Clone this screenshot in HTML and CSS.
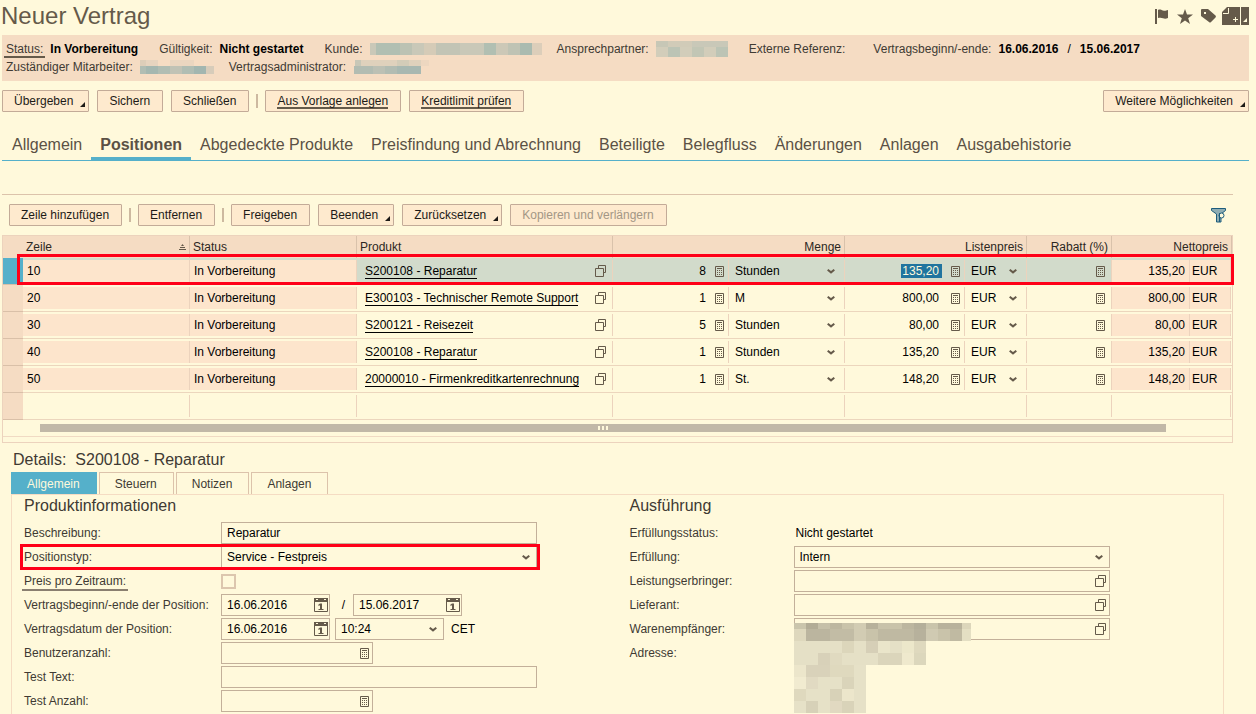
FILE: index.html
```html
<!DOCTYPE html>
<html lang="de">
<head>
  <meta charset="UTF-8">
  <meta name="viewport" content="width=device-width, initial-scale=1.0">
  <title>Neuer Vertrag</title>
  <link rel="stylesheet" href="styles.css">
</head>
<body>

  <!-- Icon definitions -->
  <svg class="icon-defs" aria-hidden="true">
    <symbol id="calc" viewBox="0 0 9 11">
      <path d="M.5.5h8v10h-8z" fill="none" stroke="#655a4a"/>
      <path d="M2 2h5v1H2zM2 4h1v1H2zM4 4h1v1H4zM6 4h1v1H6zM2 6h1v1H2zM4 6h1v1H4zM6 6h1v1H6zM2 8h1v1H2zM4 8h1v1H4zM6 8h1v1H6z" fill="#655a4a"/>
    </symbol>
    <symbol id="help" viewBox="0 0 11 12">
      <path d="M.5 3.5h8v8h-8zM3.5 3.5v-3h7v7h-2" fill="none" stroke="#655a4a"/>
    </symbol>
    <symbol id="chevron" viewBox="0 0 8 5">
      <path d="M.7.8L4 3.4 7.3.8" fill="none" stroke="#655a4a" stroke-width="2"/>
    </symbol>
    <symbol id="calendar" viewBox="0 0 14 14">
      <path d="M.5.5h13v13H.5z" fill="none" stroke="#655a4a"/>
      <path d="M0 0h14v4H0z" fill="#655a4a"/>
      <path d="M2 1h2v1H2zM10 1h2v1h-2z" fill="#fff9db"/>
      <path d="M4 7l2-1.500h2V11h1.500v1h-5v-1H6V7.500H4z" fill="#655a4a"/>
    </symbol>
  </svg>

  <div class="page">
    <header class="title-bar">
      <h1>Neuer Vertrag</h1>
      <div class="title-icons">
        <button type="button" aria-label="Markieren">
          <svg width="16" height="15" viewBox="0 0 16 15"><path d="M0 0h2v15H0zM3 1c2-1 3 0 5 .5s3 0 5-.5v8c-2 .8-3.500.8-5 .2S5 8.500 3 9z" fill="#655a4a"/></svg>
        </button>
        <button type="button" aria-label="Favorit">
          <svg width="16" height="15" viewBox="0 0 16 15"><path d="M8 0l2 5.600h6l-4.800 3.600L13 15l-5-3.500L3 15l1.800-5.800L0 5.600h6z" fill="#655a4a"/></svg>
        </button>
        <button type="button" aria-label="Etikett">
          <svg width="17" height="14" viewBox="0 0 17 14"><path d="M3 0h6l7.500 6.500q.8 1 0 2L12 13q-1 1-2 0L2 7V1q0-1 1-1z" fill="#655a4a"/><path d="M5 3h2v2H5z" fill="#fff9db"/></svg>
        </button>
        <button type="button" aria-label="Neu">
          <svg width="27" height="18" viewBox="0 0 27 18"><path d="M5 0h13v18H0V5h5zM5 0v5H0zM19 0h8v18h-8z" fill="#655a4a"/><path d="M6.500 1v5.500H1M13.500 10v5M11 12.500h5" fill="none" stroke="#fff9db"/><path d="M25 11v4h-4z" fill="#fff9db"/></svg>
        </button>
      </div>
    </header>

    <section class="status-band">
      <div class="status-row">
        <div class="info"><a class="status-link" href="#status">Status:</a><b>In Vorbereitung</b></div>
        <div class="info"><span>Gültigkeit:</span><b>Nicht gestartet</b></div>
        <div class="info info-masked"><span>Kunde:</span>
          <svg width="172" height="12">
            <rect width="172" height="12" fill="#c9c8b8"/>
            <rect x="6" width="24" height="12" fill="#b1bfb2"/>
            <rect x="30" width="12" height="12" fill="#bcc2b3"/>
            <rect x="54" width="12" height="12" fill="#d5cbb7"/>
            <rect x="66" width="24" height="12" fill="#c2c4b5"/>
            <rect x="114" width="12" height="12" fill="#b1bfb2"/>
            <rect x="126" width="12" height="12" fill="#ccc8b7"/>
            <rect x="138" width="12" height="12" fill="#bfc3b4"/>
            <rect x="150" width="12" height="12" fill="#aabbb0"/>
            <rect x="162" width="10" height="12" fill="#dcceba"/>
          </svg>
        </div>
        <div class="info"><span>Ansprechpartner:</span>
          <svg width="72" height="16">
            <rect width="72" height="6" fill="#d1cbb8"/>
            <rect width="12" height="6" fill="#c7c7b6"/>
            <rect x="36" width="36" height="6" fill="#c9c8b8"/>
            <rect y="6" width="72" height="10" fill="#d2cdba"/>
            <rect x="12" y="6" width="12" height="10" fill="#bcc4b5"/>
            <rect x="36" y="6" width="12" height="10" fill="#c2c6b5"/>
            <rect x="60" y="6" width="12" height="10" fill="#bcc4b5"/>
          </svg>
        </div>
        <div class="info"><span>Externe Referenz:</span><b></b></div>
        <div class="info"><span>Vertragsbeginn/-ende:</span><b>16.06.2016</b><b class="slash">/</b><b>15.06.2017</b></div>
      </div>
      <div class="status-row">
        <div class="info info-masked"><span>Zuständiger Mitarbeiter:</span>
          <svg width="74" height="14">
            <rect width="6" height="6" fill="#ddceb9"/>
            <rect x="6" width="12" height="6" fill="#e6d4bf"/>
            <rect x="30" width="24" height="6" fill="#ead6c0"/>
            <rect y="6" width="74" height="8" fill="#b0bdb3"/>
            <rect x="6" y="6" width="12" height="8" fill="#a4b7b0"/>
            <rect x="30" y="6" width="12" height="8" fill="#c0c2b5"/>
            <rect x="54" y="6" width="12" height="8" fill="#a2b6b0"/>
            <rect x="66" y="6" width="8" height="8" fill="#d7ccba"/>
          </svg>
        </div>
        <div class="info"><span>Vertragsadministrator:</span>
          <svg width="76" height="14">
            <rect x="2" width="66" height="6" fill="#dfd1bc"/>
            <rect x="2" width="6" height="6" fill="#c8c7b7"/>
            <rect x="44" width="12" height="6" fill="#d3ccb8"/>
            <rect x="68" width="8" height="6" fill="#edd7c0"/>
            <rect x="1" y="6" width="67" height="8" fill="#b2bcb2"/>
            <rect x="20" y="6" width="12" height="8" fill="#bcc0b4"/>
            <rect x="44" y="6" width="24" height="8" fill="#a8b8b1"/>
          </svg>
        </div>
      </div>
    </section>

    <div class="toolbar">
      <button type="button" class="btn btn-menu">Übergeben</button>
      <button type="button" class="btn">Sichern</button>
      <button type="button" class="btn">Schließen</button>
      <span class="sep"></span>
      <button type="button" class="btn"><span class="uline">Aus Vorlage anlegen</span></button>
      <button type="button" class="btn"><span class="uline">Kreditlimit prüfen</span></button>
      <button type="button" class="btn btn-menu push">Weitere Möglichkeiten</button>
    </div>

    <nav class="tabs">
      <a href="#allgemein">Allgemein</a>
      <a href="#positionen" class="active">Positionen</a>
      <a href="#produkte">Abgedeckte Produkte</a>
      <a href="#preise">Preisfindung und Abrechnung</a>
      <a href="#beteiligte">Beteiligte</a>
      <a href="#belegfluss">Belegfluss</a>
      <a href="#aenderungen">Änderungen</a>
      <a href="#anlagen">Anlagen</a>
      <a href="#ausgabe">Ausgabehistorie</a>
    </nav>

    <main class="content">
      <div class="toolbar list-toolbar">
        <button type="button" class="btn">Zeile hinzufügen</button>
        <span class="sep"></span>
        <button type="button" class="btn">Entfernen</button>
        <span class="sep"></span>
        <button type="button" class="btn">Freigeben</button>
        <button type="button" class="btn btn-menu">Beenden</button>
        <button type="button" class="btn btn-menu">Zurücksetzen</button>
        <button type="button" class="btn" disabled>Kopieren und verlängern</button>
        <button type="button" class="icon-btn push" aria-label="Filter">
          <svg width="15" height="15" viewBox="0 0 15 15"><path d="M.5.5h14v2L10 6v8H5.500V6L.5 2.500z" fill="#8fadb3" stroke="#1d5c7c"/><circle cx="10.500" cy="7.500" r="2.500" fill="#fff9db" stroke="#1d5c7c"/><path d="M8.500 5v9" stroke="#1d5c7c"/></svg>
        </button>
      </div>

      <div class="list">
        <table>
          <colgroup>
            <col class="c-sel"><col class="c-line"><col class="c-status"><col><col class="c-qty"><col class="c-unit">
            <col class="c-price"><col class="c-cur"><col class="c-disc"><col class="c-net"><col class="c-netcur">
          </colgroup>
          <thead>
            <tr>
              <th></th>
              <th><div class="th">Zeile
                <svg class="sort" width="7" height="6" viewBox="0 0 7 6"><path d="M3.500 0L5 2H2zM1 3h5v1H1zM0 5h7v1H0z" fill="#655a4a"/></svg></div></th>
              <th><div class="th">Status</div></th>
              <th><div class="th">Produkt</div></th>
              <th colspan="2"><div class="th num">Menge</div></th>
              <th colspan="2"><div class="th num">Listenpreis</div></th>
              <th><div class="th num">Rabatt (%)</div></th>
              <th colspan="2"><div class="th num">Nettopreis</div></th>
            </tr>
          </thead>
          <tbody>
            <tr class="selected">
              <td class="sel"></td>
              <td><div class="cell ro">10</div></td>
              <td><div class="cell ro">In Vorbereitung</div></td>
              <td><div class="cell product"><a href="#p10">S200108 - Reparatur</a><svg width="11" height="12"><use href="#help"/></svg></div></td>
              <td><div class="cell qty"><input type="text" value="8" aria-label="Menge 10"><svg width="9" height="11"><use href="#calc"/></svg></div></td>
              <td><div class="cell drop"><select aria-label="Einheit 10"><option>Stunden</option></select><svg width="8" height="5"><use href="#chevron"/></svg></div></td>
              <td><div class="cell price"><input type="text" class="marked" value="135,20" aria-label="Listenpreis 10"><svg width="9" height="11"><use href="#calc"/></svg></div></td>
              <td><div class="cell drop"><select aria-label="Währung 10"><option>EUR</option></select><svg width="8" height="5"><use href="#chevron"/></svg></div></td>
              <td><div class="cell disc"><input type="text" aria-label="Rabatt 10"><svg width="9" height="11"><use href="#calc"/></svg></div></td>
              <td><div class="cell ro net">135,20</div></td>
              <td><div class="cell ro netcur">EUR</div></td>
            </tr>
            <tr>
              <td class="sel"></td>
              <td><div class="cell ro">20</div></td>
              <td><div class="cell ro">In Vorbereitung</div></td>
              <td><div class="cell product"><a href="#p20">E300103 - Technischer Remote Support</a><svg width="11" height="12"><use href="#help"/></svg></div></td>
              <td><div class="cell qty"><input type="text" value="1" aria-label="Menge 20"><svg width="9" height="11"><use href="#calc"/></svg></div></td>
              <td><div class="cell drop"><select aria-label="Einheit 20"><option>M</option></select><svg width="8" height="5"><use href="#chevron"/></svg></div></td>
              <td><div class="cell price"><input type="text" value="800,00" aria-label="Listenpreis 20"><svg width="9" height="11"><use href="#calc"/></svg></div></td>
              <td><div class="cell drop"><select aria-label="Währung 20"><option>EUR</option></select><svg width="8" height="5"><use href="#chevron"/></svg></div></td>
              <td><div class="cell disc"><input type="text" aria-label="Rabatt 20"><svg width="9" height="11"><use href="#calc"/></svg></div></td>
              <td><div class="cell ro net">800,00</div></td>
              <td><div class="cell ro netcur">EUR</div></td>
            </tr>
            <tr>
              <td class="sel"></td>
              <td><div class="cell ro">30</div></td>
              <td><div class="cell ro">In Vorbereitung</div></td>
              <td><div class="cell product"><a href="#p30">S200121 - Reisezeit</a><svg width="11" height="12"><use href="#help"/></svg></div></td>
              <td><div class="cell qty"><input type="text" value="5" aria-label="Menge 30"><svg width="9" height="11"><use href="#calc"/></svg></div></td>
              <td><div class="cell drop"><select aria-label="Einheit 30"><option>Stunden</option></select><svg width="8" height="5"><use href="#chevron"/></svg></div></td>
              <td><div class="cell price"><input type="text" value="80,00" aria-label="Listenpreis 30"><svg width="9" height="11"><use href="#calc"/></svg></div></td>
              <td><div class="cell drop"><select aria-label="Währung 30"><option>EUR</option></select><svg width="8" height="5"><use href="#chevron"/></svg></div></td>
              <td><div class="cell disc"><input type="text" aria-label="Rabatt 30"><svg width="9" height="11"><use href="#calc"/></svg></div></td>
              <td><div class="cell ro net">80,00</div></td>
              <td><div class="cell ro netcur">EUR</div></td>
            </tr>
            <tr>
              <td class="sel"></td>
              <td><div class="cell ro">40</div></td>
              <td><div class="cell ro">In Vorbereitung</div></td>
              <td><div class="cell product"><a href="#p40">S200108 - Reparatur</a><svg width="11" height="12"><use href="#help"/></svg></div></td>
              <td><div class="cell qty"><input type="text" value="1" aria-label="Menge 40"><svg width="9" height="11"><use href="#calc"/></svg></div></td>
              <td><div class="cell drop"><select aria-label="Einheit 40"><option>Stunden</option></select><svg width="8" height="5"><use href="#chevron"/></svg></div></td>
              <td><div class="cell price"><input type="text" value="135,20" aria-label="Listenpreis 40"><svg width="9" height="11"><use href="#calc"/></svg></div></td>
              <td><div class="cell drop"><select aria-label="Währung 40"><option>EUR</option></select><svg width="8" height="5"><use href="#chevron"/></svg></div></td>
              <td><div class="cell disc"><input type="text" aria-label="Rabatt 40"><svg width="9" height="11"><use href="#calc"/></svg></div></td>
              <td><div class="cell ro net">135,20</div></td>
              <td><div class="cell ro netcur">EUR</div></td>
            </tr>
            <tr>
              <td class="sel"></td>
              <td><div class="cell ro">50</div></td>
              <td><div class="cell ro">In Vorbereitung</div></td>
              <td><div class="cell product"><a href="#p50">20000010 - Firmenkreditkartenrechnung</a><svg width="11" height="12"><use href="#help"/></svg></div></td>
              <td><div class="cell qty"><input type="text" value="1" aria-label="Menge 50"><svg width="9" height="11"><use href="#calc"/></svg></div></td>
              <td><div class="cell drop"><select aria-label="Einheit 50"><option>St.</option></select><svg width="8" height="5"><use href="#chevron"/></svg></div></td>
              <td><div class="cell price"><input type="text" value="148,20" aria-label="Listenpreis 50"><svg width="9" height="11"><use href="#calc"/></svg></div></td>
              <td><div class="cell drop"><select aria-label="Währung 50"><option>EUR</option></select><svg width="8" height="5"><use href="#chevron"/></svg></div></td>
              <td><div class="cell disc"><input type="text" aria-label="Rabatt 50"><svg width="9" height="11"><use href="#calc"/></svg></div></td>
              <td><div class="cell ro net">148,20</div></td>
              <td><div class="cell ro netcur">EUR</div></td>
            </tr>
            <tr>
              <td class="sel"></td>
              <td><div class="cell"></div></td>
              <td><div class="cell"></div></td>
              <td><div class="cell"></div></td>
              <td colspan="2"><div class="cell"></div></td>
              <td colspan="2"><div class="cell"></div></td>
              <td><div class="cell"></div></td>
              <td colspan="2"><div class="cell last"></div></td>
            </tr>
          </tbody>
        </table>
        <div class="scroll">
          <div class="thumb"><i></i><i></i><i></i></div>
        </div>
        <div class="mark mark-row"></div>
      </div>

      <section class="details">
        <h2><span>Details:</span><span>S200108 - Reparatur</span></h2>
        <nav class="sub-tabs">
          <a href="#d-allgemein" class="active">Allgemein</a>
          <a href="#d-steuern">Steuern</a>
          <a href="#d-notizen">Notizen</a>
          <a href="#d-anlagen">Anlagen</a>
        </nav>

        <div class="panel">
          <form class="group">
            <h3>Produktinformationen</h3>
            <div class="row">
              <label for="desc">Beschreibung:</label>
              <div class="field"><input type="text" id="desc" value="Reparatur"></div>
            </div>
            <div class="row">
              <label for="ptype">Positionstyp:</label>
              <div class="field"><select id="ptype"><option>Service - Festpreis</option></select><svg class="arrow" width="8" height="5"><use href="#chevron"/></svg></div>
              <div class="mark mark-field"></div>
            </div>
            <div class="row">
              <label for="period"><span class="period-label">Preis pro Zeitraum:</span></label>
              <input type="checkbox" id="period">
            </div>
            <div class="row">
              <label for="from">Vertragsbeginn/-ende der Position:</label>
              <div class="multi">
                <div class="field date"><input type="text" id="from" value="16.06.2016"><svg class="cal" width="14" height="14"><use href="#calendar"/></svg></div>
                <span class="between">/</span>
                <div class="field date"><input type="text" value="15.06.2017" aria-label="Vertragsende"><svg class="cal" width="14" height="14"><use href="#calendar"/></svg></div>
              </div>
            </div>
            <div class="row">
              <label for="cdate">Vertragsdatum der Position:</label>
              <div class="multi time">
                <div class="field date"><input type="text" id="cdate" value="16.06.2016"><svg class="cal" width="14" height="14"><use href="#calendar"/></svg></div>
                <div class="field date"><select aria-label="Uhrzeit"><option>10:24</option></select><svg class="arrow" width="8" height="5"><use href="#chevron"/></svg></div>
                <span class="zone">CET</span>
              </div>
            </div>
            <div class="row">
              <label for="users">Benutzeranzahl:</label>
              <div class="field short"><input type="text" id="users"><svg width="9" height="11"><use href="#calc"/></svg></div>
            </div>
            <div class="row">
              <label for="ttext">Test Text:</label>
              <div class="field"><input type="text" id="ttext"></div>
            </div>
            <div class="row">
              <label for="tcount">Test Anzahl:</label>
              <div class="field short"><input type="text" id="tcount"><svg width="9" height="11"><use href="#calc"/></svg></div>
            </div>
          </form>

          <form class="group group-right">
            <h3>Ausführung</h3>
            <div class="row">
              <span class="label">Erfüllungsstatus:</span>
              <span class="value">Nicht gestartet</span>
            </div>
            <div class="row">
              <label for="fulfil">Erfüllung:</label>
              <div class="field"><select id="fulfil"><option>Intern</option></select><svg class="arrow" width="8" height="5"><use href="#chevron"/></svg></div>
            </div>
            <div class="row">
              <label for="provider">Leistungserbringer:</label>
              <div class="field"><input type="text" id="provider"><svg class="f4" width="11" height="12"><use href="#help"/></svg></div>
            </div>
            <div class="row">
              <label for="supplier">Lieferant:</label>
              <div class="field"><input type="text" id="supplier"><svg class="f4" width="11" height="12"><use href="#help"/></svg></div>
            </div>
            <div class="row">
              <label for="shipto">Warenempfänger:</label>
              <div class="field"><input type="text" id="shipto"><svg class="f4" width="11" height="12"><use href="#help"/></svg>
                <!-- masked customer and address -->
                <svg class="masked" width="177" height="90">
                  <rect width="177" height="18" fill="#c9c3aa"/>
                  <rect width="12" height="6" fill="#cac5ac"/><rect x="12" width="12" height="6" fill="#b2ac96"/><rect x="24" width="12" height="6" fill="#c6c0a9"/><rect x="36" width="12" height="6" fill="#bdb7a0"/><rect x="60" width="12" height="6" fill="#d2ccb3"/><rect x="72" width="12" height="6" fill="#b7b19b"/><rect x="84" width="12" height="6" fill="#c8c2aa"/><rect x="108" width="12" height="6" fill="#bcb69f"/><rect x="120" width="12" height="6" fill="#b4af9a"/><rect x="132" width="12" height="6" fill="#c9c4ab"/><rect x="144" width="24" height="6" fill="#b8b29c"/><rect x="168" width="9" height="6" fill="#dcd6bb"/>
                  <rect y="6" width="12" height="12" fill="#ded8bd"/><rect x="12" y="6" width="24" height="12" fill="#bbb59f"/><rect x="36" y="6" width="24" height="12" fill="#c2bca5"/><rect x="60" y="6" width="12" height="12" fill="#d2ccb3"/><rect x="84" y="6" width="36" height="12" fill="#bfb9a2"/><rect x="120" y="6" width="12" height="12" fill="#b7b19c"/><rect x="132" y="6" width="12" height="12" fill="#d0cab2"/><rect x="156" y="6" width="12" height="12" fill="#c0baa2"/><rect x="168" y="6" width="9" height="12" fill="#e4dfc3"/>
                  <rect y="18" width="132" height="24" fill="#e5e0c6"/>
                  <rect x="48" y="18" width="12" height="12" fill="#dcd6bb"/><rect x="72" y="18" width="12" height="12" fill="#d6cfb7"/><rect x="84" y="18" width="12" height="12" fill="#eae5ca"/><rect x="108" y="18" width="12" height="12" fill="#ece7ca"/><rect x="120" y="18" width="12" height="12" fill="#dfd9be"/>
                  <rect x="24" y="30" width="12" height="12" fill="#d8d1b9"/><rect x="36" y="30" width="12" height="12" fill="#e0dac0"/><rect x="84" y="30" width="24" height="12" fill="#dbd5bb"/><rect x="108" y="30" width="12" height="12" fill="#efe9cd"/><rect x="120" y="30" width="12" height="12" fill="#dcd7bc"/>
                  <rect y="42" width="72" height="48" fill="#e6e1c7"/>
                  <rect y="42" width="12" height="12" fill="#ece6cb"/><rect x="12" y="42" width="24" height="12" fill="#d9d2ba"/><rect x="36" y="42" width="24" height="12" fill="#dfd9be"/>
                  <rect y="54" width="12" height="12" fill="#f1ebd0"/><rect x="12" y="54" width="12" height="12" fill="#e1dac2"/><rect x="48" y="54" width="12" height="12" fill="#dad4ba"/>
                  <rect y="66" width="12" height="12" fill="#dfd9be"/><rect x="36" y="66" width="12" height="12" fill="#d8d2b8"/><rect x="48" y="66" width="12" height="12" fill="#ece6cb"/>
                  <rect x="12" y="78" width="12" height="12" fill="#d7d1b8"/><rect x="36" y="78" width="12" height="12" fill="#e1d9c1"/><rect x="48" y="78" width="12" height="12" fill="#d9d3b9"/>
                </svg>
              </div>
            </div>
            <div class="row">
              <span class="label">Adresse:</span>
              <span class="value"></span>
            </div>
          </form>
        </div>
      </section>
    </main>
  </div>

</body>
</html>
```
FILE: styles.css
```css
* {
  box-sizing: border-box;
}

body {
  margin: 0;
  background: #fff9db;
  color: #000;
  font-family: "Liberation Sans", Arial, sans-serif;
  font-size: 12px;
  line-height: 18px;
}

svg {
  display: block;
  flex: none;
}

a {
  color: inherit;
  text-decoration: none;
}

input, select, button {
  font: inherit;
  color: inherit;
}

.icon-defs {
  position: absolute;
  width: 0;
  height: 0;
}

.page {
  display: flex;
  flex-direction: column;
  min-height: 100vh;
  padding: 0 7px 0 2px;
}

/* Title */
.title-bar {
  display: flex;
  align-items: center;
  justify-content: space-between;
  height: 35px;
  margin-left: -1px;
  padding-bottom: 3px;
}

h1 {
  margin: 0;
  font-size: 24px;
  font-weight: 400;
  line-height: 28px;
  color: #655a4a;
}

.title-icons {
  display: flex;
  align-items: center;
  gap: 6px;
}

.title-icons button, .icon-btn {
  padding: 0;
  border: none;
  background: none;
}

/* Status band */
.status-band {
  padding: 5px 4px;
  background: #f5dcc3;
  color: #403a33;
}

.status-row {
  display: flex;
  gap: 21px;
  height: 18px;
}

.info {
  display: flex;
  align-items: center;
  gap: 7px;
  white-space: nowrap;
}

.info b {
  color: #000;
}

.info .slash {
  font-weight: 400;
  padding: 0 2px;
}

.info-masked {
  margin-right: -6px;
}

.status-link {
  height: 18px;
  margin: 0 -2px;
  padding: 0 2px;
  border-bottom: 2px solid #655a4a;
}

/* Buttons */
.toolbar {
  display: flex;
  align-items: center;
  gap: 8px;
  padding-top: 9px;
}

.btn {
  position: relative;
  height: 22px;
  padding: 0 12px 0 11px;
  border: 1px solid #c3ab98;
  border-radius: 1px;
  background: #feeace;
  color: #1d1a17;
  line-height: 20px;
  white-space: nowrap;
}

.btn:disabled {
  color: #a39785;
}

.btn-menu {
  padding-right: 15px;
}

.btn-menu::after {
  content: "";
  position: absolute;
  right: 3px;
  bottom: 4px;
  border: solid transparent;
  border-width: 0 0 5px 5px;
  border-bottom-color: #1d1a17;
}

.uline {
  display: inline-block;
  height: 18px;
  border-bottom: 2px solid #655a4a;
}

.sep {
  width: 2px;
  height: 14px;
  margin: 0 -1px;
  background: #cdb9a0;
}

.push {
  margin-left: auto;
}

/* Main tabs */
.tabs {
  display: flex;
  margin-top: 19px;
  padding-left: 1px;
  border-bottom: 1px solid #55b0ca;
  font-size: 16px;
  line-height: 28px;
  color: #5b5145;
}

.tabs a {
  height: 29px;
  padding: 0 9px;
  white-space: nowrap;
}

.tabs .active {
  border-bottom: 3px solid #55b0ca;
  font-weight: 700;
}

.content {
  display: flex;
  flex: 1;
  flex-direction: column;
  margin: 33px 16px 0 0;
  border-top: 1px solid #dcc3ab;
}

.list-toolbar {
  padding: 9px 7px;
}

/* Item list */
.list {
  position: relative;
  padding-bottom: 5px;
  border: 1px solid #ecd3bd;
}

table {
  width: 100%;
  table-layout: fixed;
  border-collapse: separate;
  border-spacing: 0;
}

.c-sel { width: 20px; }
.c-line, .c-status { width: 167px; }
.c-qty, .c-unit { width: 116px; }
.c-price { width: 120px; }
.c-cur { width: 62px; }
.c-disc { width: 85px; }
.c-net { width: 78px; }
.c-netcur { width: 42px; }

th {
  height: 22px;
  padding: 0;
  background: #f5dcc3;
  font-weight: 400;
  text-align: left;
  color: #2c2722;
}

.th {
  display: flex;
  align-items: center;
  justify-content: space-between;
  height: 22px;
  padding: 0 3px;
  border-right: 1px solid #d9c2ab;
}

.th.num {
  justify-content: flex-end;
}

td {
  height: 27px;
  padding: 2px 0;
  border-bottom: 1px solid #ecd6bd;
}

.sel {
  background: #f5dcc3;
  border-bottom-color: #d9c0a8;
}

.selected td {
  background: #d2dbcb;
}

.selected .sel {
  background: #55b0ca;
}

.cell {
  display: flex;
  align-items: center;
  height: 22px;
  padding: 0 4px;
  border-right: 1px solid #ecd3bd;
  white-space: nowrap;
}

.cell input, .cell select, .field input, .field select {
  flex: 1;
  width: 100%;
  min-width: 0;
  height: 18px;
  margin: 0;
  padding: 0;
  border: none;
  background: none;
  outline: none;
  appearance: none;
}

.cell input {
  text-align: right;
}

.ro {
  background: #fde5cc;
}

.product {
  justify-content: space-between;
  padding: 0 6px 0 8px;
}

.product a {
  padding-top: 1px;
  line-height: 13px;
  border-bottom: 1px solid #000;
}

.qty {
  gap: 9px;
}

.price {
  gap: 9px;
  justify-content: flex-end;
}

.price input {
  padding-right: 3px;
}

.price .marked {
  flex: none;
  width: 41px;
  height: 14px;
  background: #20749f;
  color: #fff9db;
}

.drop {
  padding: 0 9px 0 6px;
}

.disc {
  padding-right: 6px;
}

.net {
  justify-content: flex-end;
}

.netcur {
  margin-right: 1px;
  padding: 0 2px;
}

.last {
  margin-right: 1px;
}

.scroll {
  height: 17px;
  padding: 4px 66px 0 37px;
  border-bottom: 1px solid #f0dac3;
}

.thumb {
  display: flex;
  align-items: center;
  justify-content: center;
  gap: 2px;
  height: 8px;
  background: #c1b8a7;
}

.thumb i {
  width: 2px;
  height: 4px;
  background: #fff9db;
}

/* Red highlight frames */
.mark {
  position: absolute;
  border: 3px solid #ff0018;
  pointer-events: none;
}

.mark-row {
  top: 18px;
  left: 14px;
  right: -2px;
  height: 31px;
}

.mark-field {
  top: -1px;
  bottom: -1px;
  left: -4px;
  right: -3px;
}

/* Details */
.details {
  display: flex;
  flex: 1;
  flex-direction: column;
  margin: 6px 9px 0;
}

h2, h3 {
  margin: 0;
  font-size: 16px;
  font-weight: 400;
  line-height: 22px;
  color: #403a33;
}

h2 {
  display: flex;
  gap: 9px;
  padding: 0 2px 1px;
}

.sub-tabs {
  display: flex;
  gap: 2px;
}

.sub-tabs a {
  height: 22px;
  padding: 0 16px 0 15px;
  border: 1px solid #dcc3ab;
  border-bottom: none;
  line-height: 22px;
  color: #403a33;
}

.sub-tabs .active {
  border-color: #55b0ca;
  background: #55b0ca;
  color: #fff9db;
}

.panel {
  display: grid;
  grid-template-columns: 1fr 1fr;
  flex: 1;
  border: 1px solid #f5dcc3;
  border-bottom: none;
}

.group {
  padding-left: 12px;
}

h3 {
  margin-bottom: 4px;
}

.row {
  position: relative;
  display: grid;
  grid-template-columns: 197px 316px;
  align-items: center;
  width: max-content;
  height: 24px;
}

.group-right .row {
  grid-template-columns: 164px 316px;
}

.row label, .label {
  color: #403a33;
}

.value {
  padding-left: 2px;
}

.period-label {
  display: inline-block;
  margin: 0 -2px;
  padding: 0 2px;
  border-bottom: 2px solid #8a7f70;
  line-height: 16px;
}

.field {
  position: relative;
  display: flex;
  align-items: center;
  height: 22px;
  padding: 0 7px 0 5px;
  border: 1px solid #c3b09a;
}

.field .arrow {
  margin-right: -1px;
}

.field .f4 {
  margin-right: -4px;
}

.field.short {
  width: 152px;
  padding-right: 3px;
}

.field.date {
  width: 109px;
  padding-right: 1px;
}

.date .arrow {
  margin-right: 5px;
}

.row input[type="checkbox"] {
  width: 15px;
  height: 15px;
  margin: 0;
  border: 2px solid #dcc6ae;
  appearance: none;
}

.multi {
  display: flex;
  align-items: center;
}

.time {
  gap: 5px;
}

.between {
  width: 23px;
  padding-left: 4px;
  text-align: center;
}

.zone {
  padding-left: 2px;
}

.masked {
  position: absolute;
  top: 4px;
  left: -1px;
}
```
